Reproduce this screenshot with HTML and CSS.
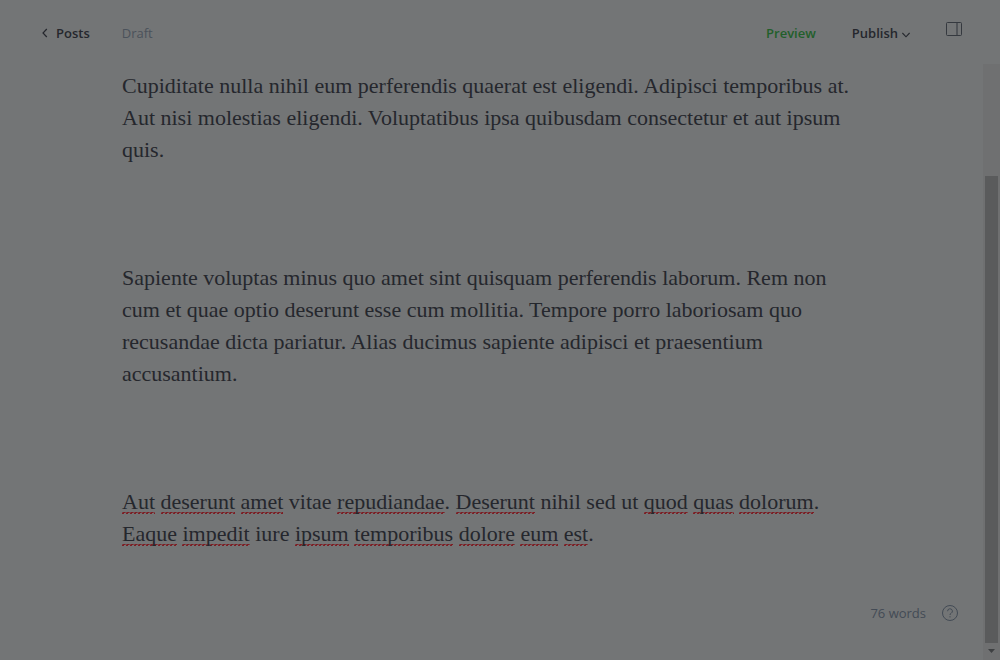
FILE: index.html
```html
<!DOCTYPE html>
<html lang="en">
<head>
<meta charset="utf-8">
<title>Post editor</title>
<link rel="stylesheet" href="styles.css">
</head>
<body>
<div class="editor">
  <header class="topbar">
    <nav class="crumbs">
      <a class="back" href="#">
        <svg class="chevron-left" width="6" height="10" viewBox="0 0 6 10" fill="none" stroke="currentColor" stroke-width="1.2"><path d="M4.800 1 1 5l3.800 4"/></svg>
        Posts
      </a>
      <span class="status">Draft</span>
    </nav>
    <div class="actions">
      <button class="preview" type="button">Preview</button>
      <button class="publish" type="button">Publish
        <svg width="8" height="6" viewBox="0 0 8 6" fill="none" stroke="currentColor" stroke-width="1.1"><path d="M.4 1 4 4.800 7.600 1"/></svg>
      </button>
      <button class="panel" type="button" aria-label="Settings">
        <svg width="16" height="14" viewBox="0 0 16 14" fill="none" stroke="currentColor"><rect x=".5" y=".5" width="15" height="13" rx="1"/><path d="M11 1v12" stroke-width="2" stroke-opacity=".55"/></svg>
      </button>
    </div>
  </header>
  <div class="workspace">
    <main class="content">
      <p>Cupiditate nulla nihil eum perferendis quaerat est eligendi. Adipisci temporibus at. Aut nisi molestias eligendi. Voluptatibus ipsa quibusdam consectetur et aut ipsum quis.</p>
      <p>Sapiente voluptas minus quo amet sint quisquam perferendis laborum. Rem non cum et quae optio deserunt esse cum mollitia. Tempore porro laboriosam quo recusandae dicta pariatur. Alias ducimus sapiente adipisci et praesentium accusantium.</p>
      <p><span class="typo">Aut</span> <span class="typo">deserunt</span> <span class="typo">amet</span> vitae <span class="typo">repudiandae</span>. <span class="typo">Deserunt</span> nihil sed ut <span class="typo">quod</span> <span class="typo">quas</span> <span class="typo">dolorum</span>. <span class="typo">Eaque</span> <span class="typo">impedit</span> iure <span class="typo">ipsum</span> <span class="typo">temporibus</span> <span class="typo">dolore</span> <span class="typo">eum</span> <span class="typo">est</span>.</p>
    </main>
    <div class="scrollbar">
      <div class="thumb"></div>
      <svg class="arrow" width="7" height="4" viewBox="0 0 7 4" fill="currentColor"><path d="M0 0h7L3.500 4z"/></svg>
    </div>
  </div>
  <footer class="wordcount">
    <span>76 words</span>
    <button class="help" type="button" aria-label="Help">
      <svg width="16" height="16" viewBox="0 0 16 16" fill="none" stroke="currentColor"><circle cx="8" cy="8" r="7.500"/><path d="M5.600 6.200a2.400 2.400 0 1 1 3.500 2.100c-.8.4-1.100.8-1.100 1.700"/><path d="M8 11.200v1.200"/></svg>
    </button>
  </footer>
</div>
</body>
</html>
```
FILE: styles.css
```css
* { box-sizing: border-box; }
body {
  margin: 0;
  background: #737576;
  color: #25272d;
  font-family: "Open Sans", "Noto Sans", sans-serif;
  font-size: 13px;
  line-height: 18px;
}
button {
  margin: 0;
  padding: 0;
  border: 0;
  background: none;
  color: inherit;
  font: inherit;
}
svg { display: block; }
.editor {
  position: relative;
  display: flex;
  flex-direction: column;
  height: 100vh;
}
.topbar {
  display: flex;
  justify-content: space-between;
  align-items: center;
  height: 64px;
  padding: 2px 38px 0 42px;
}
.crumbs, .actions, .back, .publish, .wordcount { display: flex; align-items: center; }
.crumbs { gap: 32px; }
.back {
  gap: 8px;
  color: inherit;
  font-weight: 600;
  text-decoration: none;
}
.status { color: #4b525b; }
.actions { gap: 36px; font-weight: 600; }
.preview { color: #225f2b; }
.publish { gap: 4px; }
.publish svg { margin-top: 4px; }
.panel { margin-bottom: 8px; color: #35393f; }
.workspace {
  display: flex;
  flex: 1;
  min-height: 0;
}
.content {
  flex: 1;
  padding: 6px 122px 0;
  font-family: "Liberation Serif", serif;
  font-size: 22px;
  line-height: 32px;
}
.content p { margin: 0 0 96px; }
.typo {
  background:
    repeating-linear-gradient(90deg, #7c1f25 0 2px, transparent 2px 4px) 0 100% / 100% 1px no-repeat,
    repeating-linear-gradient(90deg, #7c1f2599 0 1px, #7c1f25 1px 3px, #7c1f2599 3px 4px) 0 calc(100% - 1px) / 100% 1px no-repeat;
}
.scrollbar {
  display: flex;
  flex-direction: column;
  align-items: center;
  width: 17px;
  padding: 112px 2px 7px;
  background: #6f7071;
  color: #3e4042;
}
.thumb {
  flex: 1;
  width: 100%;
  margin-bottom: 6px;
  background: #5a5b5c;
}
.wordcount {
  position: absolute;
  right: 42px;
  bottom: 38px;
  gap: 16px;
  color: #434b55;
}
```
